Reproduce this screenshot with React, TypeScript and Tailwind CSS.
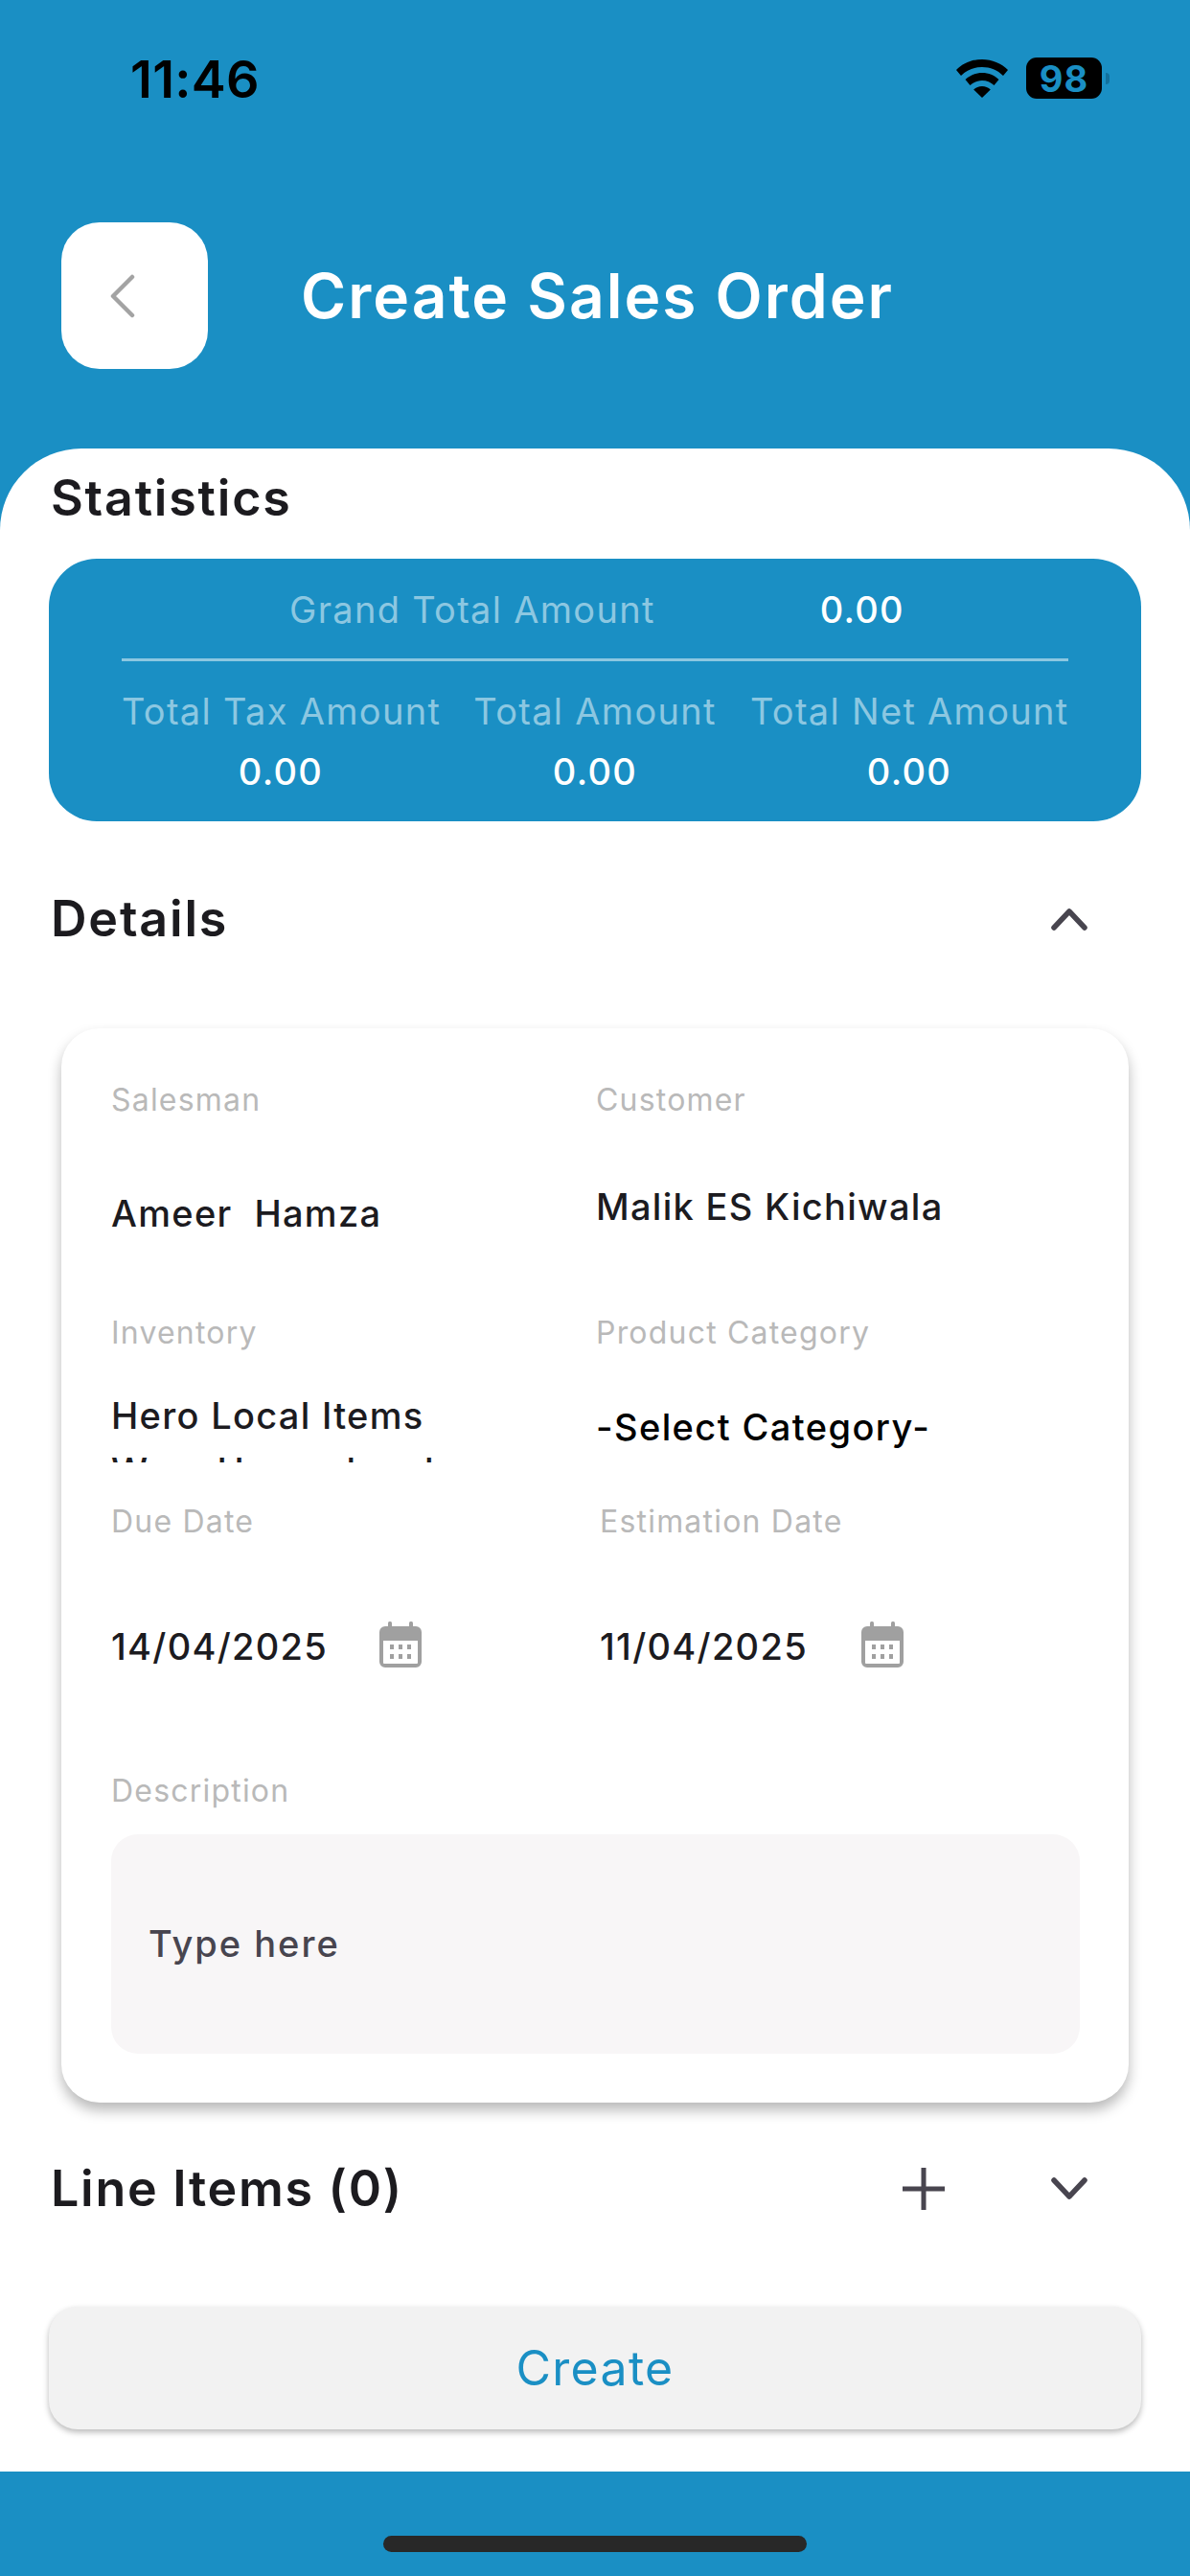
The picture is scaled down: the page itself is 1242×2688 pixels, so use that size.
import React from "react";

const font = "font-['Inter','Noto_Sans',sans-serif]";

function Field({ label, children, className = "" }: { label: string; children: React.ReactNode; className?: string }) {
  return (
    <div className={className}>
      <div className="h-[40px] text-[32px] leading-[40px] tracking-[1.2px] text-[#b9b9b9]">{label}</div>
      {children}
    </div>
  );
}

function Calendar() {
  return (
    <svg width="44" height="48" viewBox="0 0 44 48" className="-mt-[5px] block shrink-0">
      <rect x="9" y="0" width="4" height="10" rx="1.5" fill="#a0a0a0" />
      <rect x="31" y="0" width="4" height="10" rx="1.5" fill="#a0a0a0" />
      <path fillRule="evenodd" fill="#a0a0a0" d="M6 5h32a6 6 0 0 1 6 6v31a6 6 0 0 1-6 6H6a6 6 0 0 1-6-6V11a6 6 0 0 1 6-6zM4 20v23a1 1 0 0 0 1 1h34a1 1 0 0 0 1-1V20z" />
      {[11, 20, 29].map((x) => (
        <React.Fragment key={x}>
          <rect x={x} y="24" width="4" height="5" fill="#a0a0a0" />
          <rect x={x} y="34" width="4" height="5" fill="#a0a0a0" />
        </React.Fragment>
      ))}
    </svg>
  );
}

function Chevron({ up }: { up?: boolean }) {
  return (
    <svg width="40" height="26" viewBox="0 0 40 26" className="block">
      <path d={up ? "M4 22L20 5l16 17" : "M4 4l16 17L36 4"} fill="none" stroke="#48454f" strokeWidth="5.5" strokeLinecap="round" strokeLinejoin="round" />
    </svg>
  );
}

export default function App() {
  return (
    <div className={`${font} flex h-[2688px] w-[1242px] flex-col overflow-hidden bg-[#1a8fc4]`}>
      <div className="flex h-[232px] shrink-0 items-start justify-between pt-[55px] pl-[136px] pr-[84px]">
        <div className="text-[54px] font-semibold leading-[56px] tracking-[0.3px] text-black">11:46</div>
        <div className="flex items-center pt-[5px]">
          <svg width="54" height="40" viewBox="0 0 54 40" className="mr-[19px] block">
            <path fill="#000" d="M27 0c10.500 0 20 4 27 11l-5 6C43 11 35.500 8 27 8S11 11 5 17l-5-6C7 4 16.500 0 27 0z" />
            <path fill="#000" d="M27 14c6.800 0 12.900 2.600 17.500 7l-5 6C36.200 23.900 31.800 22 27 22s-9.200 1.900-12.500 5l-5-6C14.100 16.600 20.200 14 27 14z" />
            <path fill="#000" d="M27 28c3.400 0 6.500 1.300 8.800 3.500L27 40l-8.800-8.500C20.500 29.300 23.600 28 27 28z" />
          </svg>
          <div className="flex h-[43px] w-[79px] items-center justify-center rounded-[11px] bg-black text-[38px] font-bold leading-none tracking-[1px] text-[#1a8fc4]">98</div>
          <div className="ml-[4px] h-[12px] w-[4px] rounded-r-full bg-[#12709c]" />
        </div>
      </div>

      <div className="flex h-[153px] shrink-0 items-center pl-[64px]">
        <div className="flex h-[153px] w-[153px] items-center rounded-[40px] bg-white pl-[49px]">
          <svg width="28" height="46" viewBox="0 0 28 46" className="block">
            <path d="M25 3L5 23l20 20" fill="none" stroke="#a3a3a3" strokeWidth="4.500" strokeLinecap="round" strokeLinejoin="round" />
          </svg>
        </div>
        <h1 className="ml-[97px] text-[64px] font-semibold leading-[76px] tracking-[2px] text-white">Create Sales Order</h1>
      </div>

      <div className="mt-[83px] flex h-[2111px] shrink-0 flex-col rounded-t-[85px] bg-white px-[51px] pt-[22px]">
        <div className="pl-[2px] text-[52px] font-semibold leading-[60px] tracking-[1.8px] text-[#1c1b1f]">Statistics</div>

        <div className="mt-[33px] h-[274px] rounded-[50px] bg-[#1a8fc4] px-[76px] text-[38px] tracking-[1.3px]">
          <div className="flex h-[107px] items-end border-b-[3px] border-[#8cc7e1] pb-[26px] leading-[50px]">
            <span className="ml-[175px] whitespace-nowrap text-[#8cc7e1]">Grand Total Amount</span>
            <span className="ml-[172px] font-medium text-white">0.00</span>
          </div>
          <div className="mt-[27px] grid grid-cols-[332px_1fr_332px] whitespace-nowrap text-center leading-[50px]">
            <span className="text-[#8cc7e1]">Total Tax Amount</span>
            <span className="text-[#8cc7e1]">Total Amount</span>
            <span className="text-[#8cc7e1]">Total Net Amount</span>
            <span className="mt-[13px] font-medium text-white">0.00</span>
            <span className="mt-[13px] font-medium text-white">0.00</span>
            <span className="mt-[13px] font-medium text-white">0.00</span>
          </div>
        </div>

        <div className="mt-[72px] flex h-[60px] items-center justify-between pl-[2px] pr-[55px]">
          <span className="text-[52px] font-semibold leading-[60px] tracking-[1.8px] text-[#1c1b1f]">Details</span>
          <Chevron up />
        </div>

        <div className="mx-[13px] mt-[84px] h-[1121px] shrink-0 rounded-[40px] bg-white pl-[52px] pr-[51px] pt-[55px] shadow-[0_8px_14px_rgba(0,0,0,0.28)]">
          <div className="flex h-[243px]">
            <Field label="Salesman" className="w-[506px]">
              <div className="mt-[76px] text-[38px] font-medium leading-[44px] tracking-[1.3px] text-[#1c1b1f]">Ameer&nbsp; Hamza</div>
            </Field>
            <Field label="Customer">
              <div className="mt-[69px] text-[38px] font-medium leading-[44px] tracking-[1.3px] text-[#1c1b1f]">Malik ES Kichiwala</div>
            </Field>
          </div>
          <div className="flex h-[197px]">
            <Field label="Inventory" className="w-[506px]">
              <div className="mt-[37px] h-[78px] w-[420px] overflow-hidden text-[38px] font-medium leading-[58px] tracking-[1.3px] text-[#1c1b1f]">
                Hero Local Items
                <br />
                Ware House local
              </div>
            </Field>
            <Field label="Product Category">
              <div className="mt-[56px] text-[38px] font-medium leading-[44px] tracking-[1.4px] text-black">-Select Category-</div>
            </Field>
          </div>
          <div className="flex h-[281px]">
            <Field label="Due Date" className="w-[510px]">
              <div className="mt-[88px] flex items-center text-[38px] font-medium leading-[44px] tracking-[1.3px] text-[#1c1b1f]">
                <span className="w-[280px] shrink-0">14/04/2025</span>
                <Calendar />
              </div>
            </Field>
            <Field label="Estimation Date">
              <div className="mt-[88px] flex items-center text-[38px] font-medium leading-[44px] tracking-[1.3px] text-[#1c1b1f]">
                <span className="w-[273px] shrink-0">11/04/2025</span>
                <Calendar />
              </div>
            </Field>
          </div>
          <div className="h-[40px] text-[32px] leading-[40px] tracking-[1.2px] text-[#b9b9b9]">Description</div>
          <div className="mt-[25px] flex h-[229px] items-center rounded-[28px] bg-[#f8f6f7] pl-[39px] text-[38px] font-medium tracking-[2px] text-[#48454f]">Type here</div>
        </div>

        <div className="mt-[60px] flex h-[60px] items-center pl-[2px] pr-[55px]">
          <span className="text-[52px] font-semibold leading-[60px] tracking-[1.7px] text-[#1c1b1f]">Line Items (0)</span>
          <svg width="46" height="46" viewBox="0 0 46 46" className="ml-auto mr-[109px] block">
            <path d="M23 1v44M1 23h44" stroke="#48454f" strokeWidth="5" />
          </svg>
          <Chevron />
        </div>

        <button className="mt-[93px] flex h-[128px] w-full shrink-0 items-center justify-center rounded-[30px] bg-[#f2f2f2] text-[50px] leading-none tracking-[1.3px] text-[#1a8fc4] shadow-[0_3px_6px_rgba(0,0,0,0.28)]">Create</button>
      </div>

      <div className="flex flex-1 justify-center pt-[67px]">
        <div className="h-[17px] w-[442px] rounded-full bg-[#282828]" />
      </div>
    </div>
  );
}
